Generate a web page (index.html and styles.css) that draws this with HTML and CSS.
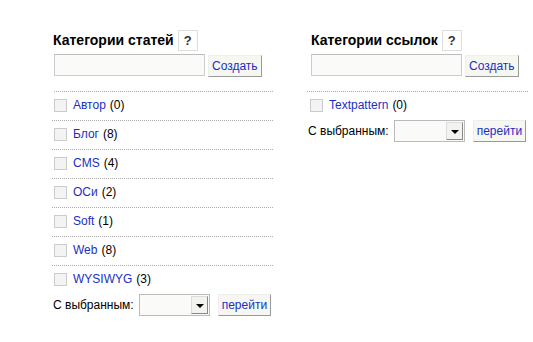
FILE: index.html
```html
<!DOCTYPE html>
<html lang="ru">
<head>
    <meta charset="UTF-8">
    <title>Категории</title>
    <link rel="stylesheet" href="styles.css">
</head>
<body>
    <div class="columns">
        <!-- Категории статей -->
        <div class="column">
            <h2>Категории статей <a class="help" href="#">?</a></h2>
            <form class="create">
                <input type="text" class="edit">
                <button type="button" class="smallbox">Создать</button>
            </form>
            <ul class="cat-list">
                <li><span class="check"></span><a href="#">Автор</a> (0)</li>
                <li><span class="check"></span><a href="#">Блог</a> (8)</li>
                <li><span class="check"></span><a href="#">CMS</a> (4)</li>
                <li><span class="check"></span><a href="#">ОСи</a> (2)</li>
                <li><span class="check"></span><a href="#">Soft</a> (1)</li>
                <li><span class="check"></span><a href="#">Web</a> (8)</li>
                <li><span class="check"></span><a href="#">WYSIWYG</a> (3)</li>
            </ul>
            <div class="multi">
                <span>С выбранным:</span>
                <span class="select"><span class="arrow"></span></span>
                <button type="button" class="smallbox">перейти</button>
            </div>
        </div>

        <!-- Категории ссылок -->
        <div class="column links">
            <h2>Категории ссылок <a class="help" href="#">?</a></h2>
            <form class="create">
                <input type="text" class="edit">
                <button type="button" class="smallbox">Создать</button>
            </form>
            <ul class="cat-list">
                <li><span class="check"></span><a href="#">Textpattern</a> (0)</li>
            </ul>
            <div class="multi">
                <span>С выбранным:</span>
                <span class="select"><span class="arrow"></span></span>
                <button type="button" class="smallbox">перейти</button>
            </div>
        </div>
    </div>
</body>
</html>
```

FILE: styles.css
```css
body {
    margin: 0;
    background: #fff;
    color: #000;
    font-family: "Liberation Sans", Arial, sans-serif;
    font-size: 12px;
}
a {
    color: #1a2fc4;
    text-decoration: none;
}
.columns {
    display: flex;
    gap: 34px;
    padding: 29px 0 0 52px;
}
.column {
    width: 221px;
}
.column.links h2 {
    margin-left: 4px;
}
h2 {
    margin: 0 0 3px 1px;
    font-size: 14px;
    font-weight: bold;
    display: flex;
    align-items: center;
    gap: 4px;
    height: 22px;
}
.help {
    display: inline-block;
    width: 18px;
    height: 19px;
    line-height: 19px;
    text-align: center;
    border: 1px solid #ddd;
    background: #fff;
    color: #333;
    font-size: 13px;
}
.create {
    display: flex;
    align-items: flex-start;
    gap: 3px;
    margin: 0 0 0 2px;
    padding-bottom: 14px;
    border-bottom: 1px dotted #aaa;
}
.column.links .create {
    margin-left: 0;
    padding-left: 4px;
}
.edit {
    width: 147px;
    height: 18px;
    margin: 0;
    padding: 1px;
    border: 1px solid #ccc;
    border-top-color: #bbb;
    background: #fafaf8;
}
.smallbox {
    margin: 1px 0 0;
    padding: 0 3px;
    height: 22px;
    font-family: inherit;
    font-size: 12px;
    color: #1a2fc4;
    background: #f7f7f2;
    border: 1px solid #eee;
    border-right-color: #999;
    border-bottom-color: #999;
    cursor: pointer;
}
.cat-list {
    list-style: none;
    margin: 0;
    padding: 0;
}
.cat-list li {
    display: flex;
    align-items: center;
    height: 26px;
    border-bottom: 1px dotted #aaa;
    padding-left: 2px;
    padding-bottom: 2px;
}
.cat-list li:last-child {
    border-bottom: none;
}
.check {
    width: 11px;
    height: 11px;
    border: 1px solid #ccc;
    background: #f3f3f3;
    margin-right: 6px;
}
.column.links .check {
    margin-left: 1px;
}
.cat-list a {
    margin-right: 4px;
}
.multi {
    display: flex;
    align-items: center;
    gap: 5px;
    margin-top: 0;
    padding-left: 1px;
}
.multi .smallbox {
    margin: 0 0 0 3px;
}
.select {
    width: 69px;
    height: 20px;
    border: 1px solid #bbb;
    background: #fafaf8;
    display: flex;
    justify-content: flex-end;
    align-items: stretch;
}
.arrow {
    width: 15px;
    margin: 1px;
    background: #f2f2ee;
    border: 1px solid #ddd;
    border-right-color: #888;
    border-bottom-color: #888;
    position: relative;
}
.arrow::after {
    content: "";
    position: absolute;
    left: 4px;
    top: 7px;
    border-left: 4px solid transparent;
    border-right: 4px solid transparent;
    border-top: 4px solid #000;
}
```
